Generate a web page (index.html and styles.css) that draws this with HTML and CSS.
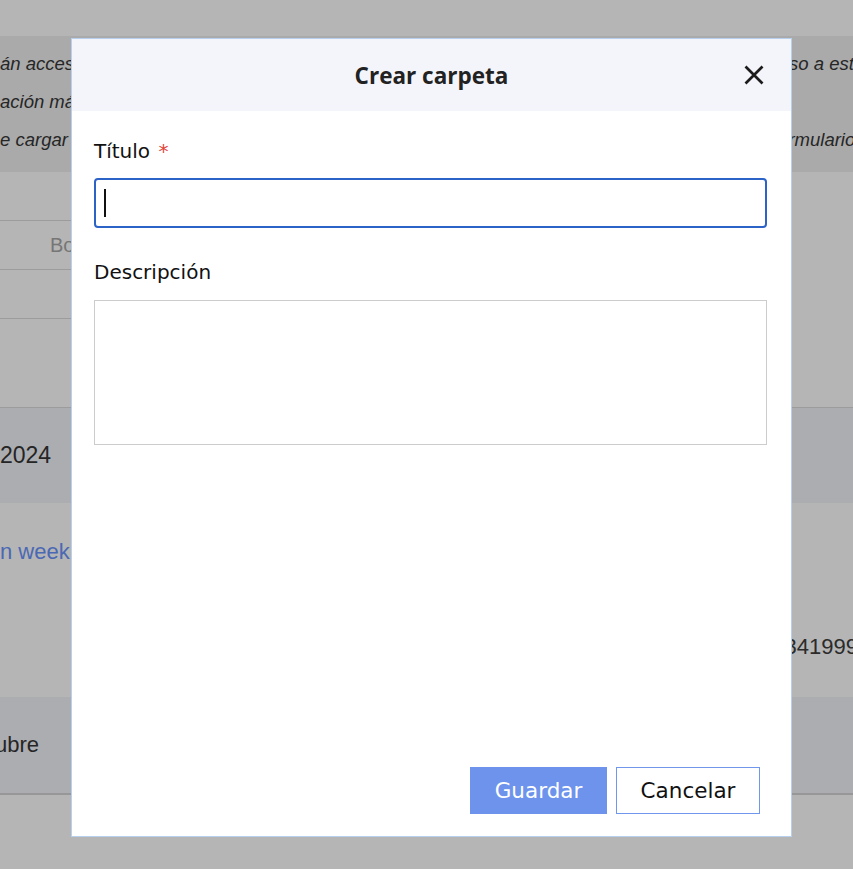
FILE: index.html
```html
<!DOCTYPE html>
<html lang="es">
  <head>
    <meta charset="UTF-8" />
    <meta name="viewport" content="width=device-width, initial-scale=1.0" />
    <title>Crear carpeta</title>
    <link rel="stylesheet" href="styles.css">
  </head>
  <body>
    <div id="page">
      <div class="top-bar"></div>
      <div class="notice">
        <div class="notice-line">
          <span>án acceso a la información de esta carpeta</span>
          <span class="right">acceso a esta sección</span>
        </div>
        <div class="notice-line">
          <span>ación más reciente disponible</span>
        </div>
        <div class="notice-line">
          <span>e cargar los documentos del formulario</span>
          <span class="right right-far">formulario</span>
        </div>
      </div>
      <div class="row short"></div>
      <div class="row short"><span class="muted">Bo</span></div>
      <div class="row short"></div>
      <div class="row gap"></div>
      <div class="row band"><span class="year">2024</span></div>
      <div class="row plain link-row"><span class="link">n week</span></div>
      <div class="row plain num-row"><span class="num">341999</span></div>
      <div class="row band last"><span class="month">ubre</span></div>
    </div>

    <div class="modal">
      <div class="modal-header">
        <span></span>
        <h2 class="modal-title">Crear carpeta</h2>
        <button class="close" type="button" aria-label="Cerrar">
          <svg width="22" height="22" viewBox="0 0 22 22">
            <path d="M2.5 2.5 L19.5 19.5 M19.5 2.5 L2.5 19.5" stroke="#1b1b1b" stroke-width="2.7" fill="none" />
          </svg>
        </button>
      </div>
      <div class="modal-body">
        <label class="label">Título <span class="req">*</span></label>
        <div class="input focused"><span class="caret"></span></div>
        <label class="label desc">Descripción</label>
        <div class="textarea"></div>
      </div>
      <div class="modal-footer">
        <button class="btn primary" type="button">Guardar</button>
        <button class="btn secondary" type="button">Cancelar</button>
      </div>
    </div>
  </body>
</html>
```

FILE: styles.css
```css
body {
  margin: 0;
  padding: 0;
  overflow: hidden;
  background-color: #b5b5b5;
  font-family: "Liberation Sans", Arial, sans-serif;
  color: #252525;
}

#page {
  height: 869px;
}

.top-bar {
  height: 36px;
}

.notice {
  background-color: #aaaaaa;
  height: 136px;
  padding-top: 9px;
  box-sizing: border-box;
}

.notice-line {
  height: 38px;
  line-height: 38px;
  font-size: 18.5px;
  font-style: italic;
  display: grid;
  grid-template-columns: 750px 1fr;
  white-space: nowrap;
  overflow: hidden;
  color: #262626;
}
.notice-line .right {
  grid-column: 2;
}
.notice-line .right-far {
  padding-left: 23px;
}

.row {
  display: flex;
  align-items: center;
  font-size: 22px;
  white-space: nowrap;
}
.row.short {
  height: 48px;
  width: 400px;
  border-bottom: 1px solid #9c9c9c;
}
.row.short .muted {
  color: #767676;
  font-size: 20px;
  padding-left: 50px;
}
.row.short:last-of-type {
  width: 100%;
}
.row.gap {
  height: 88px;
  border-bottom: 1px solid #9c9c9c;
}
.row.band {
  height: 95px;
  background-color: #acadb1;
}
.year {
  font-size: 23px;
}
.month {
  margin-left: -5px;
}
.row.plain {
  height: 97px;
}
.link-row {
  align-items: flex-start;
}
.link {
  color: #4a68b3;
  margin-top: 36px;
}
.num-row {
  justify-content: flex-end;
  align-items: flex-start;
}
.num {
  margin-top: 34px;
  margin-right: -5px;
  color: #2b2b2b;
}
.row.last {
  height: 96px;
  border-bottom: 2px solid #979797;
}

/* modal */
.modal {
  position: absolute;
  left: 71px;
  top: 38px;
  width: 721px;
  height: 799px;
  box-sizing: border-box;
  border: 1px solid #b7d0ee;
  background-color: #ffffff;
  display: flex;
  flex-direction: column;
  font-family: "DejaVu Sans", "Noto Sans", sans-serif;
  color: #111;
}

.modal-header {
  height: 72px;
  background-color: #f4f5fa;
  display: grid;
  grid-template-columns: 1fr auto 1fr;
  align-items: center;
  padding-right: 26px;
  padding-left: 26px;
}
.modal-title {
  margin: 0;
  font-family: "Open Sans", "Noto Sans", sans-serif;
  font-size: 22.5px;
  font-weight: 700;
  color: #222;
}
.close {
  justify-self: end;
  background: none;
  border: 0;
  padding: 0;
  width: 22px;
  height: 22px;
  cursor: pointer;
}
.close svg {
  display: block;
}

.modal-body {
  flex: 1;
  display: flex;
  flex-direction: column;
  padding: 0 24px 0 22px;
}
.label {
  font-size: 20px;
  line-height: 26px;
  margin-top: 27px;
  color: #111;
}
.label.desc {
  margin-top: 31px;
}
.req {
  color: #e3453a;
  margin-left: 2px;
}
.input {
  margin-top: 14px;
  height: 50px;
  box-sizing: border-box;
  border: 2px solid #2b63c6;
  border-radius: 4px;
  display: flex;
  align-items: center;
  padding-left: 8px;
}
.caret {
  width: 2px;
  height: 28px;
  background-color: #111;
}
.textarea {
  margin-top: 15px;
  height: 145px;
  box-sizing: border-box;
  border: 1px solid #cccccc;
}

.modal-footer {
  display: flex;
  justify-content: flex-end;
  gap: 9px;
  padding: 0 31px 22px 0;
}
.btn {
  height: 47px;
  font-family: "DejaVu Sans", "Noto Sans", sans-serif;
  font-size: 21.5px;
  box-sizing: border-box;
  padding: 0;
  cursor: pointer;
}
.btn.primary {
  width: 137px;
  background-color: #6d93ec;
  color: #fff;
  border: 0;
}
.btn.secondary {
  width: 144px;
  background-color: #fff;
  color: #111;
  border: 1px solid #7097eb;
}
```
